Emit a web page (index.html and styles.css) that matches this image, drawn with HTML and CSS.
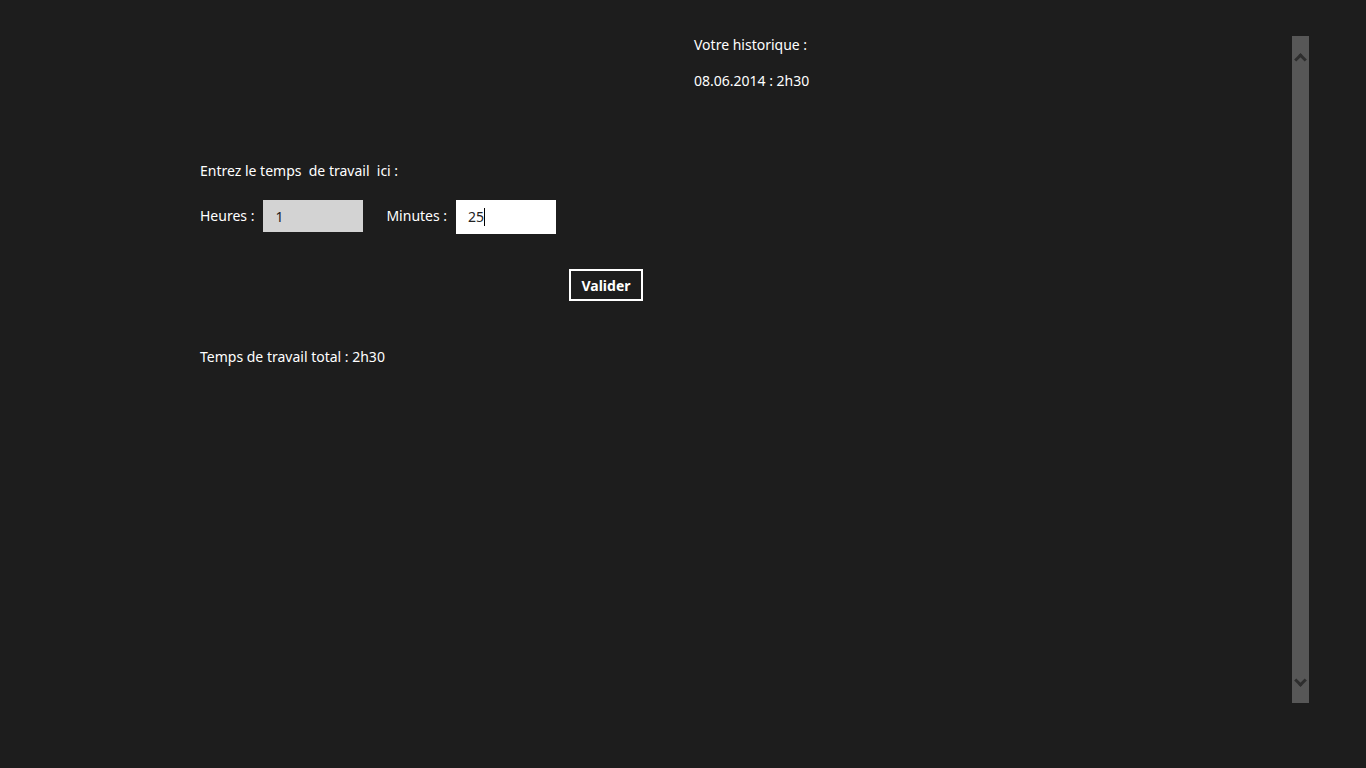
FILE: index.html
```html
<!doctype html>
<html>
	<head>
		<meta charset="utf-8" />
		<title>Temps de travail</title>
		<link rel="stylesheet" href="styles.css">
	</head>
	<body>
		<div class="page">
			<div class="entry">
				<p class="prompt">Entrez le temps&nbsp; de travail&nbsp; ici :</p>
				<div class="fields">
					<label class="field">Heures :
						<input class="hours" type="text" value="1" />
					</label>
					<label class="field">Minutes :
						<span class="minutes">25<span class="caret"></span></span>
					</label>
				</div>
				<div class="actions">
					<button class="validate">Valider</button>
				</div>
				<p class="total">Temps de travail total : 2h30</p>
			</div>
			<div class="history">
				<p>Votre historique :</p>
				<p>08.06.2014 : 2h30</p>
			</div>
			<div class="scrollbar">
				<span class="arrow up"></span>
				<span class="arrow down"></span>
			</div>
		</div>
	</body>
</html>
```
FILE: styles.css
```css
body {
	margin: 0;
	background-color: #1d1d1d;
	color: #fff;
	font-family: "Noto Sans", "Open Sans", sans-serif;
	font-size: 14px;
}
p {
	margin: 0;
	line-height: 20px;
}
.page {
	display: flex;
	height: 768px;
}
.entry {
	width: 494px;
	margin-left: 200px;
	padding-top: 161px;
}
.fields {
	display: flex;
	gap: 23px;
	margin-top: 19px;
}
.field {
	display: flex;
	align-items: flex-start;
	gap: 9px;
	height: 34px;
	line-height: 32px;
}
.hours, .minutes {
	box-sizing: border-box;
	width: 100px;
	padding: 0 12px;
	border: none;
	font-family: inherit;
	font-size: 14px;
	color: #222;
	outline: none;
}
.hours {
	height: 32px;
	background-color: #d3d3d3;
}
.minutes {
	height: 34px;
	line-height: 34px;
	background-color: #fff;
}
.caret {
	display: inline-block;
	width: 1px;
	height: 18px;
	background-color: #000;
	vertical-align: middle;
	margin-top: -2px;
}
.actions {
	margin-top: 35px;
	padding-left: 369px;
}
button.validate {
	width: 74px;
	height: 32px;
	background: none;
	border: 2px solid #fff;
	color: #fff;
	font-family: inherit;
	font-size: 14px;
	font-weight: bold;
	padding: 0;
}
.total {
	margin-top: 46px;
}
.history {
	padding-top: 35px;
}
.history p {
	margin-bottom: 16px;
}
.scrollbar {
	display: flex;
	flex-direction: column;
	justify-content: space-between;
	align-items: center;
	width: 17px;
	height: 667px;
	margin: 36px 57px 0 auto;
	padding: 16px 0 14px;
	box-sizing: border-box;
	background-color: #575757;
}
.arrow {
	width: 6px;
	height: 6px;
	border-left: 3px solid #2e2e2e;
	border-top: 3px solid #2e2e2e;
}
.up {
	transform: rotate(45deg);
	margin-top: 3px;
}
.down {
	transform: rotate(225deg);
	margin-bottom: 4px;
}
```
